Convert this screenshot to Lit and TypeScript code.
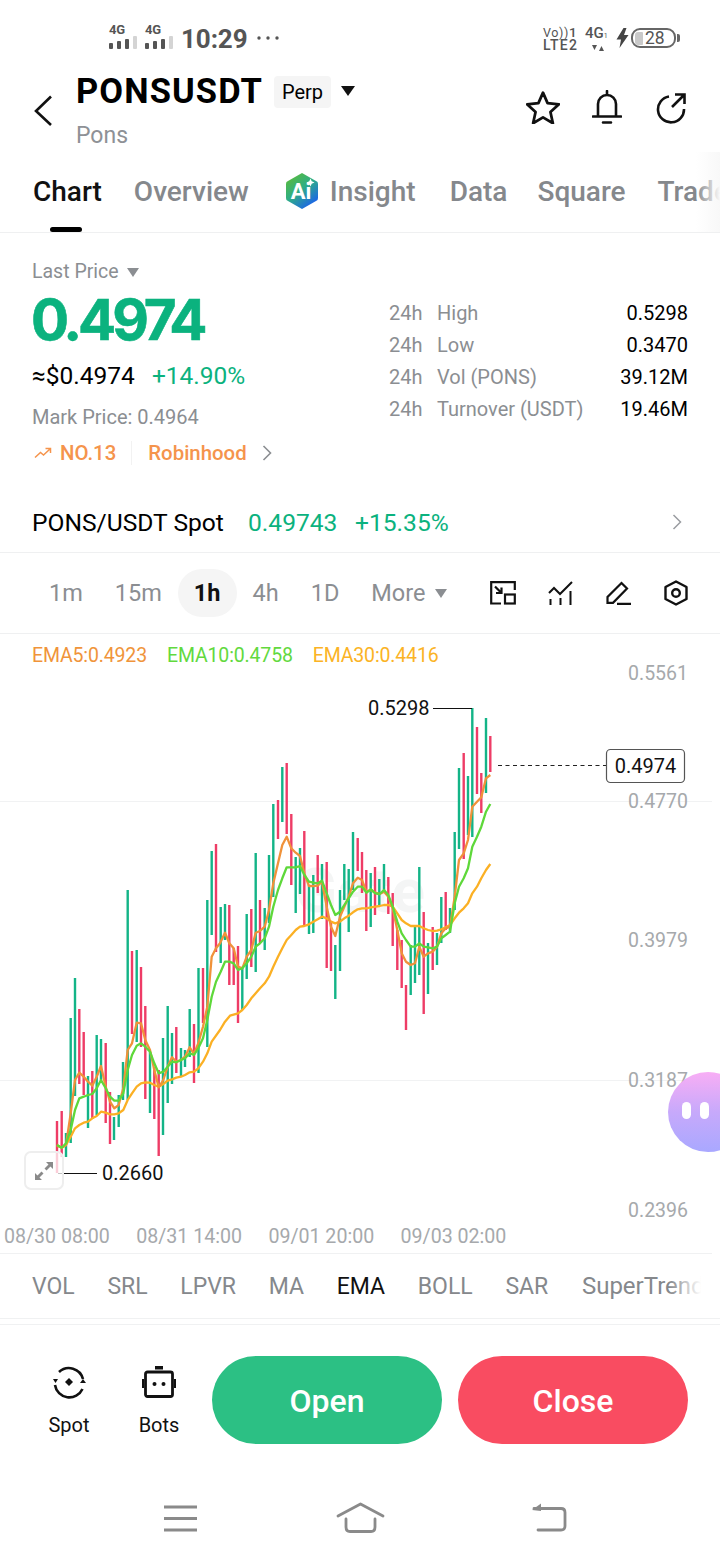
import { LitElement, html, css, svg } from "lit";
import { customElement } from "lit/decorators.js";

type Pt = [number, number];
const z6 = (p: Pt): Pt => [20 + p[0] / 3, 880 + p[1] / 3];
const z5 = (p: Pt): Pt => [180 + p[0] / 3, 750 + p[1] / 3];
const z4 = (p: Pt): Pt => [360 + p[0] / 3, 690 + p[1] / 3];

const ema5: Pt[] = [
  ...([[111,797],[125,803],[138,795],[152,700],[165,600],[178,578],[191,590],[204,605],[217,617],[230,590],[243,558],[257,620],[270,665],[283,685],[296,675],[310,625],[323,510],[336,490],[350,428],[363,430],[376,480],[390,510],[403,570],[416,622],[430,600],[443,560],[456,532],[469,545],[483,540],[495,530],[509,502],[522,522],[535,490],[549,440],[562,380],[575,230],[588,205],[600,190]] as Pt[]).map(z6),
  ...([[135,548],[148,580],[161,595],[174,650],[187,655],[200,620],[214,600],[227,548],[240,543],[254,530],[267,480],[280,400],[294,340],[307,285],[320,260],[334,295],[347,308],[360,318],[373,370],[387,408],[400,408],[413,407],[426,395],[440,470],[453,530],[466,558],[480,500],[493,470],[506,440],[519,400],[533,383],[546,390],[559,425],[573,420],[586,428],[599,432]] as Pt[]).map(z5),
  ...([[72,605],[85,620],[98,655],[112,720],[125,790],[138,815],[152,825],[165,820],[178,770],[191,800],[204,790],[218,785],[231,770],[244,730],[257,715],[270,710],[284,620],[297,510],[311,490],[324,450],[337,350],[351,335],[364,322],[378,265],[391,255]] as Pt[]).map(z4),
];
const ema10: Pt[] = [
  ...([[111,795],[125,803],[138,790],[152,750],[165,690],[178,655],[191,650],[204,645],[217,642],[230,625],[243,600],[257,625],[270,650],[283,662],[296,662],[310,640],[323,570],[336,525],[350,497],[363,490],[376,500],[390,515],[403,550],[416,580],[430,575],[443,560],[456,545],[469,547],[483,540],[495,535],[509,520],[522,525],[535,505],[549,475],[562,420],[575,350]] as Pt[]).map(z6),
  ...([[108,695],[122,665],[135,635],[148,635],[161,640],[174,660],[187,655],[200,640],[214,620],[227,590],[240,580],[254,565],[267,530],[280,470],[294,420],[307,385],[320,352],[334,352],[347,352],[360,348],[373,375],[387,395],[400,398],[413,400],[426,392],[440,430],[453,465],[466,495],[480,485],[493,465],[506,445],[519,425],[533,410],[546,410],[559,428],[573,418],[586,430],[599,432]] as Pt[]).map(z5),
  ...([[72,600],[85,615],[98,650],[112,695],[125,730],[138,750],[152,770],[165,770],[178,760],[191,770],[204,772],[218,775],[231,770],[244,745],[257,735],[270,725],[284,640],[297,590],[311,565],[324,535],[337,470],[351,440],[364,410],[378,365],[391,342]] as Pt[]).map(z4),
];
const ema30: Pt[] = [
  ...([[111,795],[125,803],[138,795],[152,770],[165,745],[178,735],[191,728],[204,725],[217,715],[230,708],[243,695],[257,698],[270,703],[283,703],[296,700],[310,690],[323,660],[336,640],[350,620],[363,610],[376,607],[390,608],[403,615],[416,620],[430,612],[443,602],[456,598],[469,593],[483,590],[495,585],[509,577],[522,575],[535,565],[549,545],[562,520],[575,485],[600,450]] as Pt[]).map(z6),
  ...([[135,815],[150,797],[174,790],[187,780],[200,765],[214,745],[227,730],[240,715],[254,700],[267,680],[280,650],[294,620],[307,595],[320,570],[334,555],[347,540],[360,530],[373,528],[387,523],[400,515],[413,508],[426,500],[440,505],[453,515],[466,520],[480,515],[493,505],[506,497],[519,487],[533,478],[546,475],[559,475],[573,472],[586,470],[599,468]] as Pt[]).map(z5),
  ...([[72,645],[85,645],[98,650],[112,670],[125,690],[138,700],[152,708],[165,708],[178,708],[191,715],[204,720],[218,723],[231,722],[244,718],[257,712],[270,705],[284,685],[297,668],[311,655],[324,640],[337,610],[351,590],[364,565],[378,540],[391,522]] as Pt[]).map(z4),
];

const candles: [number, number, number, "g" | "r"][] = [
  [57,1121,1173,"r"],[61.7,1111,1157,"r"],[66,1133,1157,"g"],[70.7,1018,1143,"g"],[75,978,1096,"g"],[79.3,1009,1084,"r"],[83.7,1032,1095,"r"],[88,1076,1128,"g"],[92.3,1071,1119,"r"],[96.7,1035,1115,"g"],
  [101,1039,1080,"g"],[105.7,1043,1123,"r"],[110,1092,1144,"r"],[114,1117,1140,"g"],[118.7,1095,1127,"g"],[123,1062,1100,"g"],[127.7,890,1100,"g"],[132,951,1034,"r"],[136.7,950,1042,"g"],[141,967,1047,"r"],
  [145.3,1006,1099,"r"],[150,1052,1113,"g"],[154.3,1067,1119,"r"],[158.7,1070,1156,"r"],[163,1038,1135,"g"],[167.7,1006,1103,"g"],[172,1033,1084,"g"],[176.3,1027,1073,"r"],[181,1048,1076,"g"],[185,1050,1067,"g"],
  [189.7,1009,1057,"g"],[194,1024,1083,"r"],[198.5,968,1073,"g"],[203,968,1023,"r"],[207.3,900,1047,"g"],[211.7,851,935,"g"],[216,844,952,"r"],[220.7,907,963,"g"],[225,904,940,"g"],[229.3,905,985,"r"],
  [233.7,948,985,"r"],[238,946,1023,"r"],[242.3,967,1010,"g"],[246.7,914,979,"g"],[251.3,909,967,"r"],[255.7,853,972,"g"],[260,900,943,"r"],[264.7,908,950,"g"],[269,855,923,"g"],[273.3,804,897,"g"],
  [278,800,839,"r"],[282.3,767,822,"g"],[286.7,763,834,"r"],[291.3,814,885,"r"],[295.7,857,913,"g"],[300,848,894,"g"],[304.3,831,925,"r"],[309,885,934,"g"],[313.3,875,933,"g"],[317.7,855,893,"r"],
  [322,864,919,"g"],[326.7,862,968,"r"],[331,923,971,"r"],[335.3,945,999,"g"],[340,890,971,"g"],[344.3,864,900,"g"],[348.7,869,932,"g"],[353,832,890,"g"],[357.7,838,871,"r"],[362,852,893,"r"],
  [366.3,870,931,"r"],[370.7,873,927,"g"],[375,867,915,"r"],[379.3,879,905,"g"],[384,864,893,"g"],[388.3,877,914,"r"],[392.7,893,946,"r"],[397.3,930,970,"r"],[401.7,940,988,"r"],[406,985,1030,"r"],
  [410.7,945,995,"g"],[415,925,983,"g"],[419.3,867,975,"g"],[423.7,912,1014,"r"],[428,943,994,"g"],[432.7,927,970,"r"],[437,933,965,"g"],[441.3,897,943,"g"],[445.7,892,930,"r"],[450,908,933,"g"],
  [454.7,832,910,"g"],[459,768,849,"g"],[463.7,753,859,"r"],[468,776,835,"g"],[472.3,708,837,"g"],[477,727,794,"r"],[481.3,773,813,"r"],[486,718,793,"g"],[490.3,736,772,"r"],
];

const pts = (a: Pt[]) => a.map((p) => `${p[0].toFixed(1)},${p[1].toFixed(1)}`).join(" ");

const stats = [
  ["High", "0.5298"],
  ["Low", "0.3470"],
  ["Vol (PONS)", "39.12M"],
  ["Turnover (USDT)", "19.46M"],
];
const yLabels: [string, number][] = [["0.5561", 673], ["0.4770", 801], ["0.3979", 940], ["0.3187", 1080], ["0.2396", 1210]];

@customElement("app-root")
export class AppRoot extends LitElement {
  static styles = css`
    :host { display: block; width: 720px; height: 1560px; background: #fff; font-family: Roboto, "Liberation Sans", sans-serif; color: #000; position: relative; overflow: hidden; }
    svg { display: block; }

    .status { height: 66px; padding: 0 0 0 109px; box-sizing: border-box; display: flex; align-items: flex-start; position: relative; color: #555; }
    .sig { width: 28px; margin-right: 8px; margin-top: 24px; }
    .sig span { display: block; font-size: 13px; line-height: 12px; font-weight: 700; letter-spacing: -0.2px; color: #555; }
    .sig svg { margin-top: 0; }
    .time { font-size: 26px; font-weight: 700; line-height: 26px; margin: 26px 0 0 0; width: 76px; letter-spacing: -0.1px; }
    .dots { width: 24px; margin-top: 36px; }
    .sright { margin-left: auto; margin-right: 40px; margin-top: 25px; display: flex; align-items: flex-start; }
    .volte { width: 42px; color: #555; }
    .volte .a { font-size: 12.5px; line-height: 14px; height: 14px; white-space: nowrap; letter-spacing: 0.6px; }
    .volte .a b { font-weight: 500; font-size: 13.5px; }
    .volte .b { font-size: 14px; line-height: 12px; font-weight: 500; letter-spacing: 1.2px; }
    .g4 { width: 31px; font-size: 15px; line-height: 16px; font-weight: 500; }
    .g4 small { font-size: 7px; font-weight: 400; }
    .g4 svg { margin: 1px 0 0 6px; }
    .bolt { width: 15px; margin-top: 3px; margin-left: -1px; margin-right: 1px; }
    .batt { width: 45px; height: 20px; box-sizing: border-box; border: 2px solid #666; border-radius: 9px; position: relative; font-size: 17.5px; line-height: 16px; font-weight: 400; text-align: left; padding-left: 12px; margin-top: 3px; }
    .batt i { position: absolute; left: 2px; top: 1.500px; bottom: 1.500px; width: 8px; background: #c9c9c9; border-radius: 3px 1px 1px 3px; }
    .nub { width: 3px; height: 8px; background: #666; border-radius: 0 2px 2px 0; margin-top: 9px; margin-left: 1px; }

    .head { height: 86px; display: flex; position: relative; box-sizing: border-box; }
    .back { width: 76px; padding: 28px 0 0 33px; box-sizing: border-box; }
    .titles { flex: 1; padding-top: 8px; }
    .title-row { display: flex; align-items: center; height: 34px; }
    .title { font-size: 34.5px; line-height: 34px; font-weight: 700; letter-spacing: 1.1px; width: 198px; white-space: nowrap; }
    .perp { width: 57px; height: 32px; background: #f5f5f5; border-radius: 4px; font-size: 20px; line-height: 33px; text-align: center; margin-top: 2px; }
    .caret { margin-left: 10px; }
    .pons { font-size: 23px; line-height: 26px; color: #8e9196; margin-top: 15px; }
    .actions { display: flex; gap: 33px; padding: 24px 33px 0 0; align-items: flex-start; }

    .tabs { border-bottom: 1px solid #eff0f1; display: flex; align-items: flex-start; padding: 24px 0 0 33px; gap: 32px; position: relative; overflow: hidden; white-space: nowrap; font-size: 28px; line-height: 32px; font-weight: 500; color: #85888c; height: 56px; }
    .tabs .active { color: #111; }
    .tabs .ai { display: flex; align-items: flex-start; gap: 11px; margin: 0 2px 0 4px; }
    .tabs .ai svg { margin-top: -4px; }
    .tabs .data { margin-right: -2px; }
    .tabs .bar { position: absolute; left: 50px; top: 75px; width: 32px; height: 5px; background: #000; border-radius: 3px; }
    .tabs .fade { position: absolute; right: 0; top: 0; bottom: 0; width: 24px; background: linear-gradient(90deg, rgba(248,248,248,0), #f8f8f8); }

    .market { height: 239px; position: relative; display: flex; padding: 0 32px; box-sizing: border-box; }
    .left { width: 357px; }
    .lp { display: flex; align-items: center; gap: 8px; font-size: 19.5px; line-height: 24px; color: #8b8e92; margin-top: 27px; }
    .big { font-family: Inter, Roboto, sans-serif; font-size: 56.5px; line-height: 60px; font-weight: 700; color: #0bb27e; letter-spacing: -4.1px; margin: 6px 0 0 -1px; -webkit-text-stroke: 0.6px #0bb27e; }
    .usd { display: flex; gap: 17px; font-size: 24.5px; line-height: 30px; margin-top: 11px; }
    .usd em { font-style: normal; color: #0bb27e; }
    .mark { font-size: 20px; line-height: 26px; color: #8b8e92; margin-top: 13px; }
    .tags { display: flex; align-items: center; font-size: 20.4px; line-height: 24px; color: #f5944c; font-weight: 500; margin-top: 11px; height: 24px; }
    .tags .n { margin: 0 15px 0 8px; }
    .tags .div { width: 1px; height: 24px; background: #f2f2f2; margin-right: 16px; }
    .tags svg.ch { margin-left: 15px; }
    .right { flex: 1; padding-top: 64px; }
    .row { display: flex; height: 32px; line-height: 32px; font-size: 20px; color: #8b8e92; }
    .row .h { width: 48px; }
    .row .v { margin-left: auto; color: #000; font-weight: 400; }

    .spot { height: 81px; padding: 20px 32px 0; border-bottom: 1px solid #eff0f1; box-sizing: border-box; display: flex; align-items: center; font-size: 24.6px; }
    .spot .nm { font-weight: 400; width: 216px; white-space: nowrap; }
    .spot .gr { color: #0bb27e; font-weight: 400; }
    .spot .g1 { width: 107px; }
    .spot svg { margin-left: auto; margin-right: 6px; }

    .intervals { height: 81px; border-bottom: 1px solid #eff0f1; box-sizing: border-box; display: flex; align-items: center; padding-left: 33px; font-size: 23.5px; color: #8b8e92; }
    .iv { padding: 0 16px; height: 48px; line-height: 48px; border-radius: 24px; }
    .iv.on { background: #f5f5f5; color: #111; font-weight: 700; }
    .more { display: flex; align-items: center; gap: 10px; margin-left: 0; }
    .tools { margin-left: auto; display: flex; gap: 32px; padding-right: 32px; align-items: center; }

    .chart { height: 588px; position: relative; }
    .legend { position: absolute; left: 32px; top: 10px; display: flex; gap: 20px; font-size: 19.5px; line-height: 24px; letter-spacing: -0.15px; }
    .e5 { color: #f0943a; }
    .e10 { color: #62d93e; }
    .e30 { color: #fbb325; }
    .expand { position: absolute; left: 24px; top: 517px; width: 40px; height: 39px; box-sizing: border-box; border: 2px solid #eeeeee; border-radius: 7px; background: rgba(255,255,255,0.75); display: flex; align-items: center; justify-content: center; }
    .ylab { font-size: 19.5px; fill: #a6a9ac; font-family: Roboto, sans-serif; }
    .blab { font-size: 20px; fill: #111; font-family: Roboto, sans-serif; }

    .xaxis { height: 32px; width: 712px; border-bottom: 1px solid #f0f1f2; box-sizing: border-box; display: flex; padding-left: 4px; gap: 26.4px; font-size: 19.6px; line-height: 30px; color: #a6a9ac; }
    .inds { height: 64px; width: 703px; display: flex; gap: 32.7px; padding-left: 32px; box-sizing: border-box; overflow: hidden; white-space: nowrap; align-items: center; font-size: 23px; color: #85888c; position: relative; }
    .inds .on { color: #111; }
    .inds .last { margin-left: 1px; font-size: 24px; }
    .inds .fade { position: absolute; right: 0; top: 0; bottom: 0; width: 34px; background: linear-gradient(90deg, rgba(255,255,255,0), #fff 95%); }
    .rule1 { height: 1px; background: #f0f1f2; }
    .rule2 { height: 1px; background: #f0f1f2; margin-top: 5px; }

    .bottom { height: 119px; display: flex; padding: 31px 32px 0 0; box-sizing: border-box; }
    .act { width: 90px; display: flex; flex-direction: column; align-items: center; font-size: 20px; line-height: 24px; color: #111; }
    .act svg { margin-top: 9px; }
    .act span { margin-top: 14px; }
    .act:first-child { margin-left: 24px; }
    .btn { width: 230px; height: 88px; border-radius: 44px; color: #fff; font-size: 32px; font-weight: 500; line-height: 90px; text-align: center; margin-left: 16px; }
    .act + .act + .btn { margin-left: 8px; }
    .open { background: #2cc084; }
    .close { background: #f94c61; }

    .nav { height: 116px; position: relative; }
    .pet { position: absolute; left: 668px; top: 1072px; width: 80px; height: 80px; border-radius: 40px; background: linear-gradient(180deg, #f8aef5 0%, #c7a9fb 50%, #a9a8ff 100%); }
    .pet i { position: absolute; top: 30px; width: 9px; height: 17px; background: #fff; border-radius: 5px; }
    .pet i.l { left: 14px; }
    .pet i.r { left: 32px; }
  `;

  private sig() {
    return svg`<svg width="28" height="13" viewBox="0 0 28 13">
      <rect x="0" y="7" width="4" height="6" rx="1" fill="#555"/>
      <rect x="8" y="5" width="4" height="8" rx="1" fill="#555"/>
      <rect x="16" y="3" width="4" height="10" rx="1" fill="#555"/>
      <rect x="24" y="0" width="4" height="13" rx="1" fill="#d4d4d4"/>
    </svg>`;
  }

  render() {
    return html`
      <div class="status">
        <div class="sig"><span>4G</span>${this.sig()}</div>
        <div class="sig"><span>4G</span>${this.sig()}</div>
        <div class="time">10:29</div>
        <svg class="dots" width="24" height="4" viewBox="0 0 24 4"><circle cx="2" cy="2" r="1.7" fill="#555"/><circle cx="11" cy="2" r="1.7" fill="#555"/><circle cx="20" cy="2" r="1.7" fill="#555"/></svg>
        <div class="sright">
          <div class="volte"><div class="a">Vo))<b>1</b></div><div class="b">LTE2</div></div>
          <div class="g4">4G<small>1</small><svg width="14" height="6" viewBox="0 0 14 6"><path d="M1 0h5L3.500 5zM8 6h5L10.500 1z" fill="#555"/></svg></div>
          <svg class="bolt" width="12" height="20" viewBox="0 0 12 20"><path d="M7 0 0 11.500h4.500L3 20l9-13H7.500L10 0z" fill="#444"/></svg>
          <div class="batt"><i></i>28</div><div class="nub"></div>
        </div>
      </div>

      <div class="head">
        <div class="back"><svg width="22" height="32" viewBox="0 0 22 32"><path d="M18 2.500 3 17l15 14" fill="none" stroke="#111" stroke-width="2.600"/></svg></div>
        <div class="titles">
          <div class="title-row"><div class="title">PONSUSDT</div><div class="perp">Perp</div>
            <svg class="caret" width="14" height="10" viewBox="0 0 14 10"><path d="M0 0h14L7 10z" fill="#111"/></svg></div>
          <div class="pons">Pons</div>
        </div>
        <div class="actions">
          <svg width="34" height="34" viewBox="0 0 32 32"><path d="M16 2.500 20.300 12.400 31 13.500 23 20.700 25.300 31.300 16 25.800 6.700 31.300 9 20.700 1 13.500 11.700 12.400Z" fill="none" stroke="#111" stroke-width="2.600" stroke-linejoin="round"/></svg>
          <svg width="30" height="34" viewBox="0 0 30 34" style="margin-left:-1px"><path d="M15 1v3M6 26V14a9 9 0 0 1 18 0v12M1 26.500h28M11 32.500h8" fill="none" stroke="#111" stroke-width="2.600" stroke-linecap="round"/></svg>
          <svg width="32" height="32" viewBox="0 0 32 32" style="margin-top:2px"><path d="M14 4.500A13 13 0 1 0 29 17M20 2.500h9.500V12M29 3 17 15" fill="none" stroke="#111" stroke-width="2.600"/></svg>
        </div>
      </div>

      <div class="tabs">
        <span class="active">Chart</span><span>Overview</span>
        <span class="ai">
          <svg width="34" height="38" viewBox="0 0 34 38"><defs><linearGradient id="aig" x1="0" y1="0.1" x2="0.65" y2="1"><stop offset="0" stop-color="#5cbc35"/><stop offset="0.5" stop-color="#2fae86"/><stop offset="1" stop-color="#1c66e6"/></linearGradient></defs>
            <path d="M17 1 31 9a3 3 0 0 1 2 3v14a3 3 0 0 1-2 3L17 37 3 29a3 3 0 0 1-2-3V12a3 3 0 0 1 2-3z" fill="url(#aig)"/>
            <text x="16" y="27" text-anchor="middle" font-size="22" font-weight="700" fill="#fff" font-family="Roboto">Ai</text>
            <path d="M25.500 6.500 26.700 9.300 29.500 10.500 26.700 11.700 25.500 14.500 24.300 11.700 21.500 10.500 24.300 9.300z" fill="#fff"/></svg>
          Insight</span>
        <span class="data">Data</span><span>Square</span><span>Trade</span>
        <div class="bar"></div><div class="fade"></div>
      </div>

      <div class="market">
        <div class="left">
          <div class="lp">Last Price <svg width="12" height="9" viewBox="0 0 12 9"><path d="M0 0h12L6 9z" fill="#8b8e92"/></svg></div>
          <div class="big">0.4974</div>
          <div class="usd"><span>≈$0.4974</span><em>+14.90%</em></div>
          <div class="mark">Mark Price: 0.4964</div>
          <div class="tags">
            <svg width="18" height="12" viewBox="0 0 18 12" style="margin-left:2px"><path d="M1 10.500 6.500 5.500l3 2.500L16 2M11.500 1.500H16.500V6" fill="none" stroke="#f5944c" stroke-width="1.500"/></svg>
            <span class="n">NO.13</span><span class="div"></span><span>Robinhood</span>
            <svg class="ch" width="10" height="16" viewBox="0 0 10 16"><path d="M1.500 1 8.500 8l-7 7" fill="none" stroke="#8b8e92" stroke-width="1.600"/></svg>
          </div>
        </div>
        <div class="right">
          ${stats.map((s) => html`<div class="row"><span class="h">24h</span><span>${s[0]}</span><span class="v">${s[1]}</span></div>`)}
        </div>
      </div>

      <div class="spot">
        <span class="nm">PONS/USDT Spot</span>
        <span class="gr g1">0.49743</span><span class="gr">+15.35%</span>
        <svg width="10" height="16" viewBox="0 0 10 16"><path d="M1.500 1 8.500 8l-7 7" fill="none" stroke="#9a9da1" stroke-width="1.500"/></svg>
      </div>

      <div class="intervals">
        <span class="iv">1m</span><span class="iv">15m</span><span class="iv on">1h</span><span class="iv">4h</span><span class="iv">1D</span>
        <span class="iv more">More <svg width="12" height="9" viewBox="0 0 12 9"><path d="M0 0h12L6 9z" fill="#8b8e92"/></svg></span>
        <div class="tools">
          <svg width="26" height="24" viewBox="0 0 26 24"><path d="M11 22.500H1.200V1.200h23.600V9M5 5.500l6 6M11.500 6.500v5.500H6" fill="none" stroke="#111" stroke-width="2.200"/><rect x="15" y="13.500" width="9.800" height="9" fill="none" stroke="#111" stroke-width="2.200"/></svg>
          <svg width="26" height="24" viewBox="0 0 26 24"><path d="M1 12l5-5 6 6L24 1" fill="none" stroke="#111" stroke-width="2"/><path d="M2.500 18v6M12.500 17v7M22.500 10v14" fill="none" stroke="#111" stroke-width="2"/></svg>
          <svg width="26" height="24" viewBox="0 0 26 24"><path d="M15.500 2 21 7.500 7 21.800H1.500V16zM11 22.800H25" fill="none" stroke="#111" stroke-width="2.200"/></svg>
          <svg width="24" height="26" viewBox="0 0 24 26"><path d="M12 1.500 22.500 7v12L12 24.500 1.500 19V7z" fill="none" stroke="#111" stroke-width="2.400" stroke-linejoin="round"/><circle cx="12" cy="13" r="3.800" fill="none" stroke="#111" stroke-width="2.400"/></svg>
        </div>
      </div>

      <div class="chart">
        <svg width="720" height="588" viewBox="0 634 720 588">
          <path d="M0 801.500H712M0 1080.500H712" stroke="#f1f2f3" stroke-width="1"/>
          <text x="360" y="912" text-anchor="middle" font-size="62" font-weight="700" fill="#f4f5f5" font-family="Roboto">Gate</text>
          ${candles.map((c) => svg`<rect x="${c[0] - 1.2}" y="${c[1]}" width="2.400" height="${c[2] - c[1]}" fill="${c[3] === "g" ? "#13b487" : "#ee3c66"}"/>`)}
          <polyline points="${pts(ema30)}" fill="none" stroke="#fbb024" stroke-width="2.300" stroke-linejoin="round"/>
          <polyline points="${pts(ema5)}" fill="none" stroke="#f0923a" stroke-width="2.300" stroke-linejoin="round"/>
          <polyline points="${pts(ema10)}" fill="none" stroke="#5ed83a" stroke-width="2.300" stroke-linejoin="round"/>
          ${yLabels.map((l) => svg`<text class="ylab" x="688" y="${l[1] + 7}" text-anchor="end">${l[0]}</text>`)}
          <text class="blab" x="368" y="715">0.5298</text>
          <path d="M433 708.500H472" stroke="#111" stroke-width="1.200"/>
          <text class="blab" x="102" y="1180">0.2660</text>
          <path d="M58 1173.500H97" stroke="#111" stroke-width="1.200"/>
          <path d="M498 765.500H606" stroke="#222" stroke-width="1.200" stroke-dasharray="4 3.500"/>
          <rect x="606.500" y="749.500" width="78" height="33" rx="4" fill="#fff" stroke="#555" stroke-width="1.200"/>
          <text class="blab" x="645.500" y="773" text-anchor="middle">0.4974</text>
        </svg>
        <div class="legend"><span class="e5">EMA5:0.4923</span><span class="e10">EMA10:0.4758</span><span class="e30">EMA30:0.4416</span></div>
        <div class="expand"><svg width="20" height="20" viewBox="0 0 20 20"><path d="M19 1h-7l2.500 2.500-4 4 2 2 4-4L19 8zM1 19h7l-2.500-2.500 4-4-2-2-4 4L1 12z" fill="#8a8a8a"/></svg></div>
      </div>

      <div class="xaxis"><span>08/30 08:00</span><span>08/31 14:00</span><span>09/01 20:00</span><span>09/03 02:00</span></div>
      <div class="inds">
        <span>VOL</span><span>SRL</span><span>LPVR</span><span>MA</span><span class="on">EMA</span><span>BOLL</span><span>SAR</span><span class="last">SuperTrend</span>
        <div class="fade"></div>
      </div>
      <div class="rule1"></div><div class="rule2"></div>

      <div class="bottom">
        <div class="act">
          <svg width="34" height="34" viewBox="0 0 34 34"><path d="M7 7A14.500 14.500 0 0 1 31 14M30.500 24A14.500 14.500 0 0 1 3 20" fill="none" stroke="#111" stroke-width="2.600"/><path d="M1 14h5l-2.500 4zM28 18l3-4 3 4z" fill="#111"/><path d="M17 13l4 4-4 4-4-4z" fill="#111"/></svg>
          <span>Spot</span></div>
        <div class="act">
          <svg width="34" height="34" viewBox="0 0 34 34"><rect x="13" y="1" width="8" height="3.500" fill="#111"/><rect x="3.500" y="7" width="27" height="24.500" rx="2" fill="none" stroke="#111" stroke-width="2.800"/><path d="M1 14v9M33 14v9" stroke="#111" stroke-width="2"/><circle cx="12.500" cy="19" r="2" fill="#111"/><circle cx="21.500" cy="19" r="2" fill="#111"/></svg>
          <span>Bots</span></div>
        <div class="btn open">Open</div>
        <div class="btn close">Close</div>
      </div>

      <div class="nav">
        <svg width="720" height="116" viewBox="0 1444 720 116">
          <path d="M164 1507H197M164 1518.500H197M164 1530H197" stroke="#8a8a8a" stroke-width="3"/>
          <path d="M338 1516 360.500 1504 383 1516" fill="none" stroke="#8a8a8a" stroke-width="2.800" stroke-linecap="round" stroke-linejoin="round"/>
          <path d="M346 1519V1527Q346 1531.500 350 1531.500H371Q375 1531.500 375 1527V1519" fill="none" stroke="#8a8a8a" stroke-width="2.800" stroke-linecap="round"/>
          <path d="M534 1508.500H561Q565 1508.500 565 1512.500V1526Q565 1530 561 1530H538" fill="none" stroke="#8a8a8a" stroke-width="2.800" stroke-linecap="round"/>
          <path d="M532 1510 541 1503.500V1511z" fill="#8a8a8a"/>
        </svg>
      </div>

      <div class="pet"><i class="l"></i><i class="r"></i></div>
    `;
  }
}
